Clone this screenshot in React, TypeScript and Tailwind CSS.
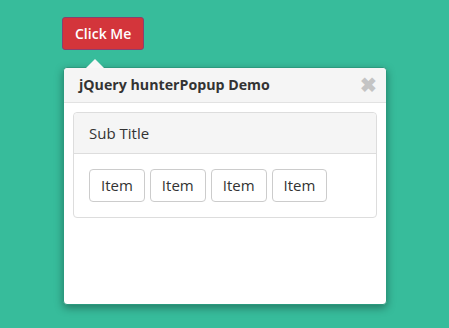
export default function App() {
  const items = ["Item", "Item", "Item", "Item"];

  return (
    <div
      className="w-[449px] h-[328px] bg-[#37bc9b] pl-[62px] pt-[17px]"
      style={{ fontFamily: '"Open Sans", "Segoe UI", sans-serif' }}
    >
      <button className="h-[33px] px-[12px] bg-[#d3353b] border border-[#8a3f6e] rounded-[3px] text-white text-[14px] font-semibold leading-none">
        Click Me
      </button>

      <div className="relative mt-[17px] ml-[1px] w-[324px] h-[238px] bg-white border border-[#2b9a7e] rounded-[4px] shadow-[0_3px_8px_rgba(0,0,0,0.35)]">
        {/* arrow */}
        <div className="absolute -top-[9px] left-[22px] w-0 h-0 border-l-[9px] border-r-[9px] border-b-[9px] border-l-transparent border-r-transparent border-b-[#f7f7f7]" />

        <div className="h-[35px] bg-[#f5f5f5] border-b border-[#e2e2e2] rounded-t-[4px] flex items-center justify-between pl-[15px] pr-[9px]">
          <span className="text-[14.2px] font-bold text-[#333]">jQuery hunterPopup Demo</span>
          <span className="text-[#c4c4c4] text-[20px] font-bold leading-none">✖</span>
        </div>

        <div className="p-[9px]">
          <div className="border border-[#dddddd] rounded-[4px]">
            <div className="h-[41px] bg-[#f5f5f5] border-b border-[#dddddd] rounded-t-[4px] flex items-center pl-[15px] text-[15px] text-[#333]">
              Sub Title
            </div>
            <div className="p-[15px] flex gap-[5px]">
              {items.map((item, i) => (
                <button
                  key={i}
                  className="h-[33px] px-[11px] bg-white border border-[#cccccc] rounded-[4px] text-[15px] text-[#333]"
                >
                  {item}
                </button>
              ))}
            </div>
          </div>
        </div>
      </div>
    </div>
  );
}
